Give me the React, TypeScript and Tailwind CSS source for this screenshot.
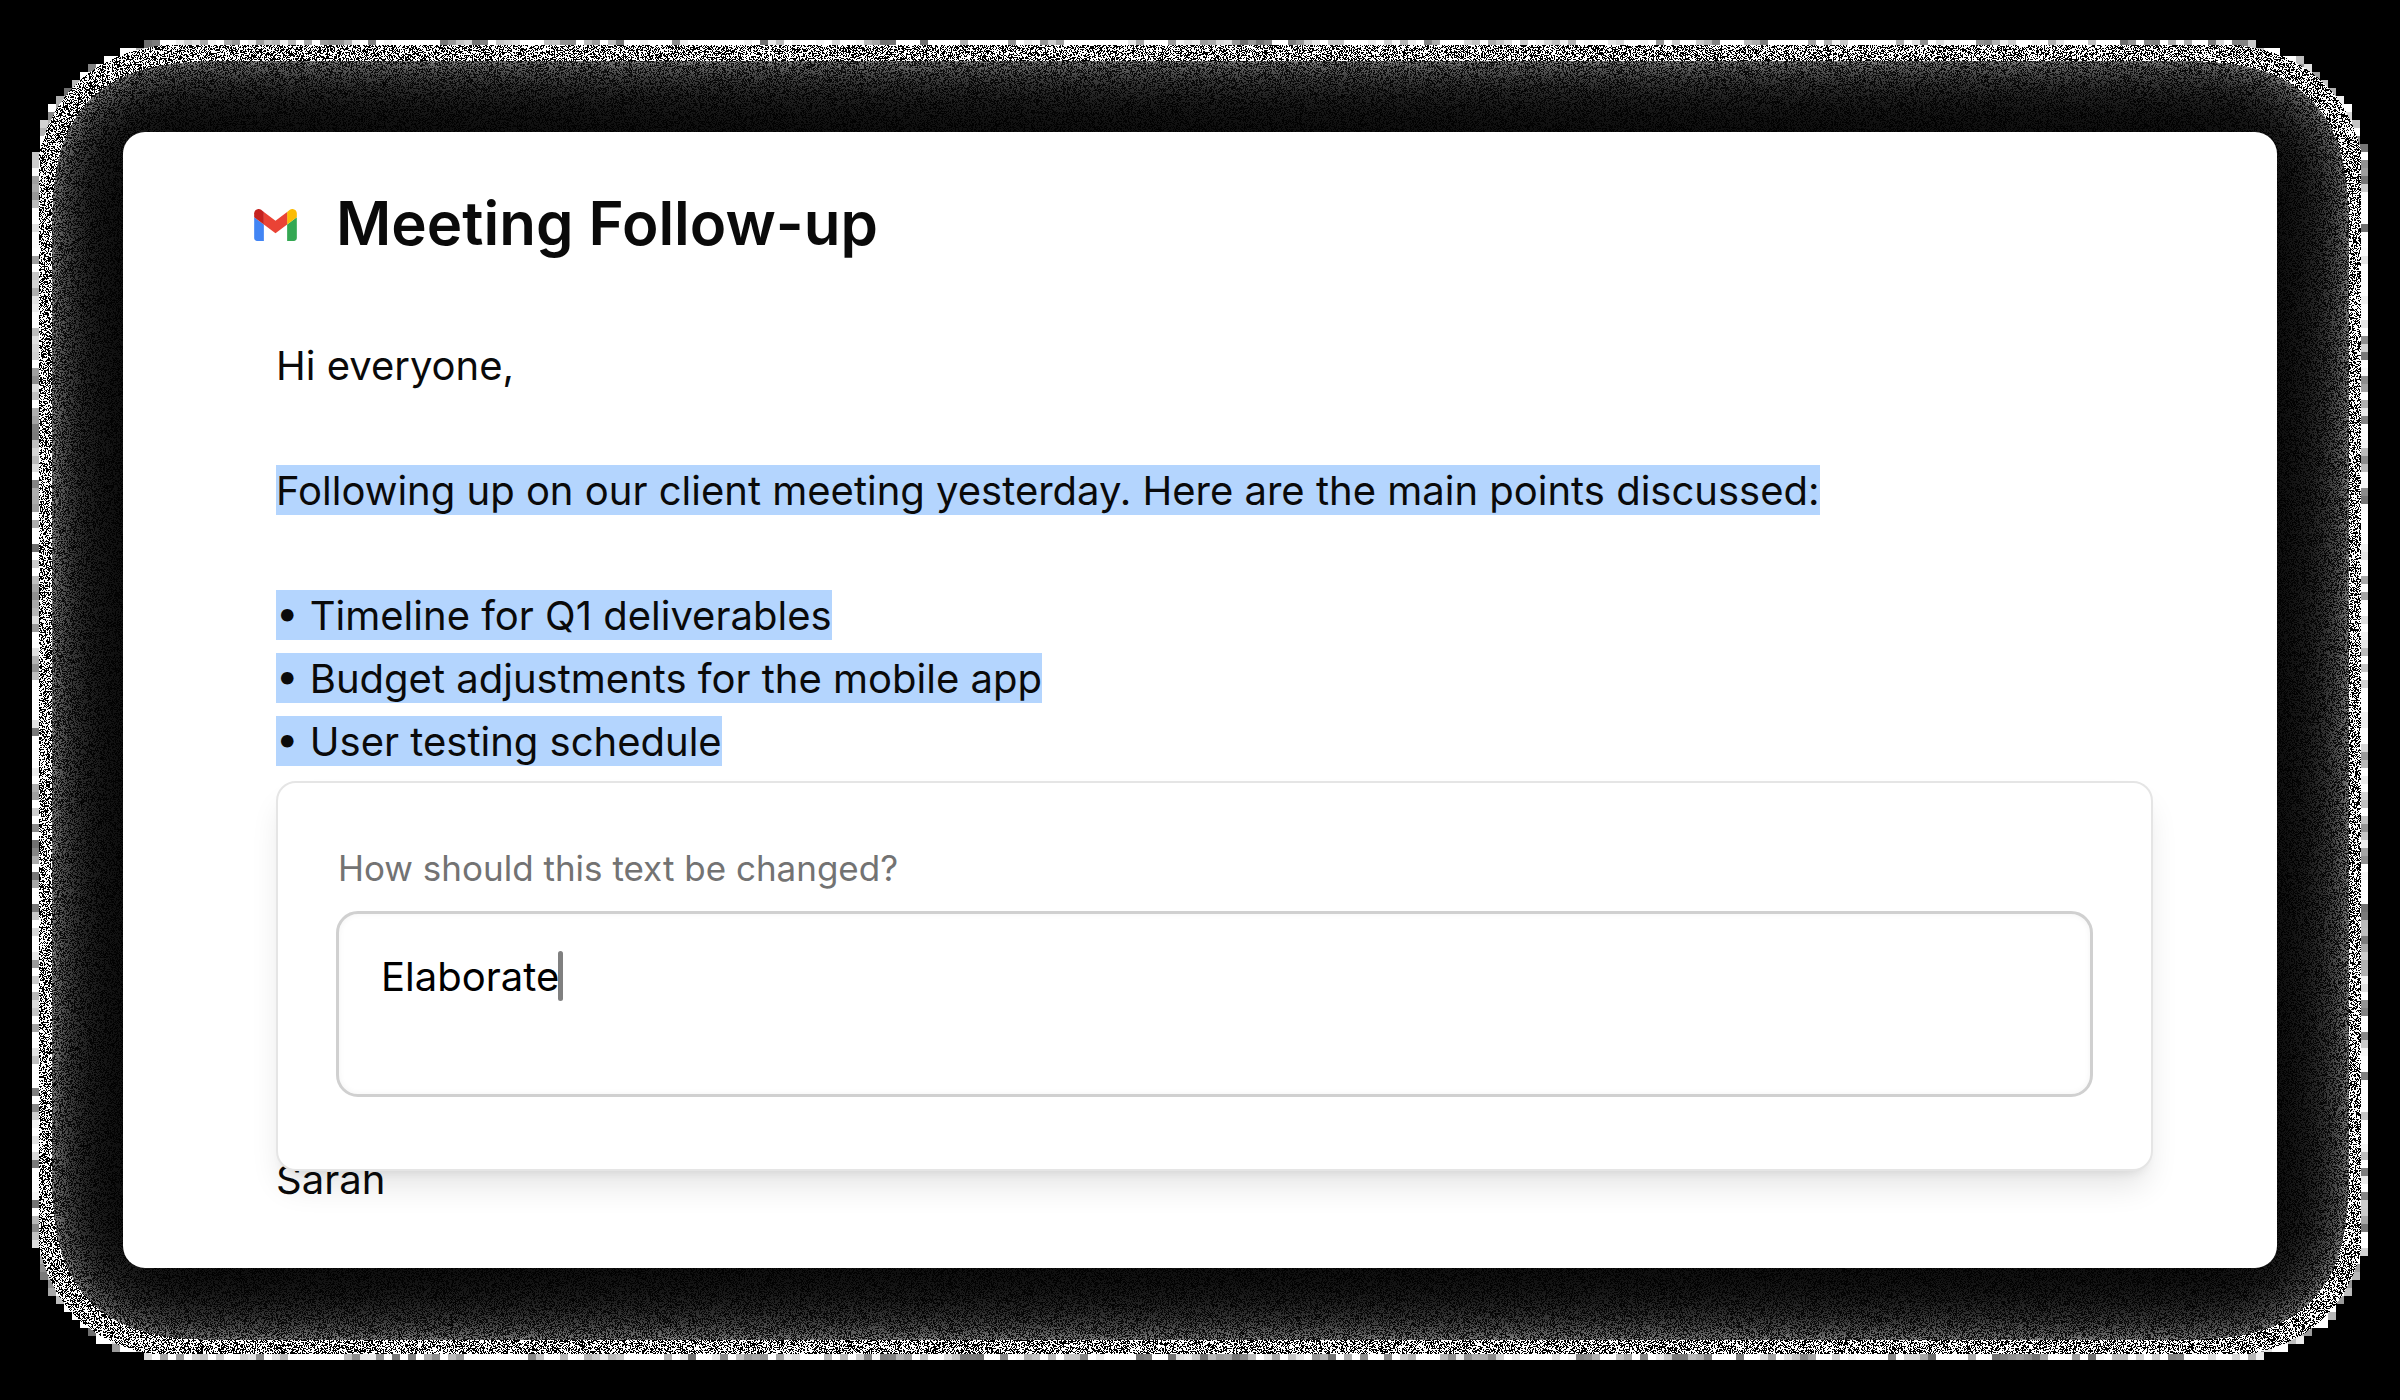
import { useEffect, useRef, useState, type RefObject } from "react";

const POINTS = ["Timeline for Q1 deliverables", "Budget adjustments for the mobile app", "User testing schedule"];

const SIGMA = 44;
const PEAK = 34;
const CUTOFF = 0.65;
const RIM = 1.73;

/** Cumulative normal distribution. */
function phi(z: number) {
  const t = 1 / (1 + 0.2316419 * Math.abs(z));
  const tail =
    0.3989423 *
    Math.exp((-z * z) / 2) *
    t *
    (0.3193815 + t * (-0.3565638 + t * (1.781478 + t * (-1.821256 + t * 1.330274))));
  return z > 0 ? 1 - tail : tail;
}

/** Small seeded generator, so that the grain is the same on each draw. */
function makeRandom(seed: number) {
  let s = seed;
  return () => {
    s = (s + 0x6d2b79f5) | 0;
    let t = Math.imul(s ^ (s >>> 15), 1 | s);
    t = (t + Math.imul(t ^ (t >>> 7), 61 | t)) ^ t;
    return ((t ^ (t >>> 14)) >>> 0) / 4294967296;
  };
}

function profile(length: number, start: number, end: number) {
  const values = new Float32Array(length);
  for (let i = 0; i < length; i++) values[i] = phi((i - start) / SIGMA) - phi((i - end) / SIGMA);
  return values;
}

/** Paints the grainy glow that surrounds the card. */
function paintGlow(canvas: HTMLCanvasElement, card: HTMLElement) {
  const w = canvas.offsetWidth;
  const h = canvas.offsetHeight;
  canvas.width = w;
  canvas.height = h;
  const ctx = canvas.getContext("2d");
  if (!ctx) return;

  const left = card.offsetLeft;
  const top = card.offsetTop;
  const right = left + card.offsetWidth;
  const bottom = top + card.offsetHeight;
  const px = profile(w, left, right);
  const py = profile(h, top, bottom);
  const random = makeRandom(7);
  const image = ctx.createImageData(w, h);
  const data = image.data;

  const put = (x: number, y: number, v: number) => {
    const i = (y * w + x) * 4;
    data[i] = data[i + 1] = data[i + 2] = v;
    data[i + 3] = 255;
  };

  // Coarse cells along the rim.
  const cellsTop = Math.floor((top - 87) / 8) * 8;
  const cellsLeft = Math.floor((left - 84) / 8) * 8;
  for (let by = Math.max(0, cellsTop); by + 7 < h && by < bottom + 86; by += 8) {
    for (let bx = Math.max(0, cellsLeft); bx + 7 < w && bx < right + 84; bx += 8) {
      const ax = Math.max(px[bx], px[bx + 7]);
      const ay = Math.max(py[by], py[by + 7]);
      if (PEAK * ax * ay < CUTOFF) continue;
      const tone = Math.min(255, 110 + Math.floor(random() * 240));
      for (let y = by; y < by + 8; y++) for (let x = bx; x < bx + 8; x++) put(x, y, tone);
    }
  }

  // Fine grain, brightest where the glow is thinnest.
  for (let y = Math.max(0, top - 87); y < Math.min(h, bottom + 86); y++) {
    for (let x = Math.max(0, left - 84); x < Math.min(w, right + 84); x++) {
      const alpha = PEAK * px[x] * py[y];
      if (alpha < CUTOFF) continue;
      const level = alpha < RIM ? 1 : alpha + 0.4 + (random() - 0.5) * 0.8;
      const lit = random() < 0.48 ? random() * (alpha < RIM ? 0 : 0.4) : 1;
      put(x, y, Math.min(255, (255 * lit) / level));
    }
  }
  ctx.putImageData(image, 0, 0);
}

function Glow({ card }: { card: RefObject<HTMLElement | null> }) {
  const ref = useRef<HTMLCanvasElement>(null);
  useEffect(() => {
    const paint = () => {
      if (ref.current && card.current) paintGlow(ref.current, card.current);
    };
    paint();
    document.fonts.ready.then(paint);
    window.addEventListener("resize", paint);
    return () => window.removeEventListener("resize", paint);
  }, [card]);
  return <canvas ref={ref} aria-hidden="true" className="absolute inset-0 h-full w-full" />;
}

function GmailLogo() {
  return (
    <svg viewBox="52 42 88 66" className="mt-1 h-8 w-[43px] shrink-0" role="img" aria-label="Gmail">
      <path fill="#4285f4" d="M58 108h14V74L52 59v43c0 3.32 2.69 6 6 6" />
      <path fill="#34a853" d="M120 108h14c3.32 0 6-2.69 6-6V59l-20 15" />
      <path fill="#fbbc04" d="M120 48v26l20-15v-8c0-7.42-8.47-11.65-14.4-7.2" />
      <path fill="#ea4335" d="M72 74V48l24 18 24-18v26L96 92" />
      <path fill="#c5221f" d="M52 51v8l20 15V48l-5.6-4.2c-5.94-4.45-14.4-.22-14.4 7.2" />
    </svg>
  );
}

function EditPopover() {
  const [text, setText] = useState("Elaborate");
  return (
    <form className="absolute inset-x-0 top-full mt-2 rounded-[20px] border-2 border-[#e5e5e5] bg-white px-[58px] pt-[60px] pb-[72px] shadow-[0_20px_32px_-6px_rgb(0_0_0/0.11),0_8px_12px_-8px_rgb(0_0_0/0.11)]">
      <label htmlFor="instruction" className="block pl-[2px] text-[35px] leading-[50px] text-[#737373]">
        How should this text be changed?
      </label>
      <div className="relative mt-[18px]">
        <textarea
          id="instruction"
          value={text}
          onChange={(e) => setText(e.target.value)}
          className="block h-[186px] w-full resize-none rounded-[22px] border-[3px] border-[#d0d0d0] bg-white px-[42px] py-[33px] text-[40px] leading-[60px] text-black caret-transparent shadow-[inset_0_0_6px_rgb(0_0_0/0.05)] outline-none"
        />
        <span className="absolute top-[40px] left-[222px] h-[50px] w-[5px] rounded-sm bg-[#808080]" />
      </div>
    </form>
  );
}

export default function App() {
  const card = useRef<HTMLElement>(null);
  return (
    <main className="relative min-h-screen bg-black px-[123px] pt-[132px] pb-[133px] font-['Inter',sans-serif]">
      <Glow card={card} />
      <article ref={card} className="relative rounded-[22px] bg-white pt-[55px] pr-[124px] pb-[57px] pl-[131px] text-[#0a0a0a]">
        <header className="flex items-center gap-[39px]">
          <GmailLogo />
          <h1 className="text-[60px] leading-[72px] font-semibold">Meeting Follow-up</h1>
        </header>
        <div className="mt-[75px] pl-[22px] text-[40px] leading-[63px]">
          <p>Hi everyone,</p>
          <div className="relative mt-[62px]">
            <p>
              <mark className="bg-[#b4d5fe] pt-px text-inherit">
                Following up on our client meeting yesterday. Here are the main points discussed:
              </mark>
            </p>
            <ul className="mt-[62px]">
              {POINTS.map((point) => (
                <li key={point}>
                  <mark className="bg-[#b4d5fe] pt-px text-inherit">• {point}</mark>
                </li>
              ))}
            </ul>
            <EditPopover />
          </div>
          <p className="mt-[375px]">Sarah</p>
        </div>
      </article>
    </main>
  );
}
